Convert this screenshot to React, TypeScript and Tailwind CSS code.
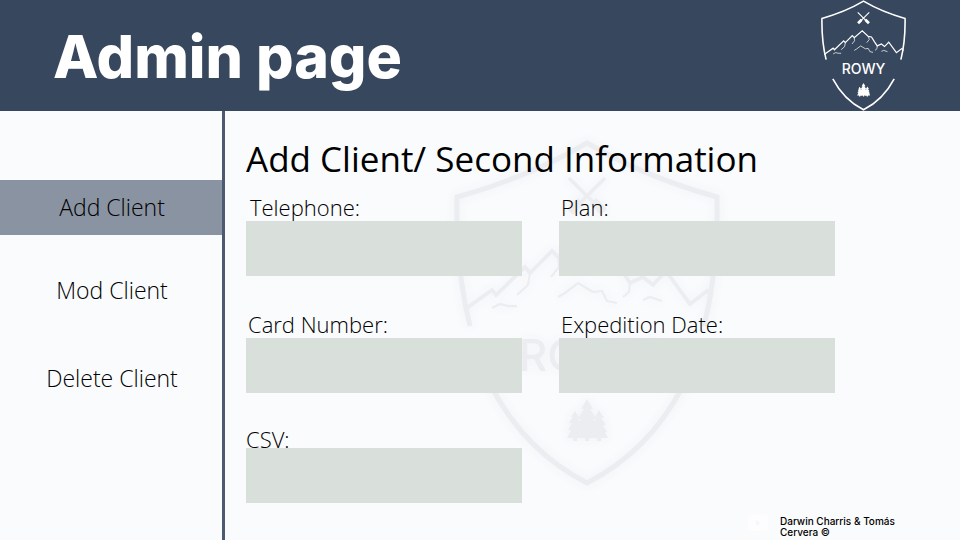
import { useState } from "react";

type CrestProps = { className: string; weight: number };

function Crest({ className, weight }: CrestProps) {
  return (
    <svg viewBox="0 0 266 346" className={className} fill="none" stroke="currentColor" strokeWidth={weight} aria-hidden="true">
      <path d="M16 186C7 150 2 105 3 57C50 44 94 26 133 3C172 26 216 44 263 57C264 105 259 150 250 186" />
      <path d="M37 246C60 290 94 323 133 343C172 323 206 290 229 246" />
      <g strokeWidth={weight * 0.75}>
        <path d="M10 170L38 150L42 155L71 127L76 133L98 111L104 117L129 96L148 113L158 115L168 131L176 143L189 137L199 145L212 131L236 164L253 151L258 157" />
      </g>
      <g strokeWidth={weight * 0.45}>
        <path d="M76 133L74 145L63 155M104 117L105 127L97 137M148 113L151 123L143 133M104 157L111 153L124 143L139 152L148 151L153 161L163 163M176 143L175 152L169 157M189 160L196 157L208 161M38 168L46 164L54 166L63 166" />
      </g>
      <path d="M115 38L133 56L146 69M151 38L133 56L120 69" strokeWidth={weight * 0.7} />
      <path d="M139 61L150 72M127 61L116 72" strokeWidth={weight * 1.7} />
      <g fill="currentColor" stroke="none">
        <path d="M133 259L139 269H136L142 279H139L145 289H142L147 298H135V301H131V298H119L124 289H121L127 279H124L130 269H127Z" />
        <path d="M121 271L126 279H124L128 287H126L130 298H123V301H119V298H113L117 290H114L118 283H115L119 277H117Z" />
        <path d="M145 270L150 278H147L152 285H149L153 292H151L154 298H147V301H143V298H137L140 287H138L142 279H140Z" />
        <text x="133" y="231" textAnchor="middle" fontSize="44" fontWeight="500" className="font-['Inter',sans-serif]">ROWY</text>
      </g>
    </svg>
  );
}

const sections = [
  { name: "Add Client", spacing: "mt-[69px]" },
  { name: "Mod Client", spacing: "mt-7" },
  { name: "Delete Client", spacing: "mt-[33px]" },
];

const fields = [
  { id: "telephone", label: "Telephone:", type: "tel", row: "", inset: "pl-1" },
  { id: "plan", label: "Plan:", type: "text", row: "", inset: "pl-0.5" },
  { id: "card", label: "Card Number:", type: "text", row: "mt-[34px]", inset: "pl-0.5" },
  { id: "expedition", label: "Expedition Date:", type: "text", row: "mt-[34px]", inset: "pl-0.5" },
  { id: "csv", label: "CSV:", type: "text", row: "mt-8 *:first:-mb-[5px]", inset: "" },
];

export default function App() {
  const [active, setActive] = useState("Add Client");

  return (
    <div className="flex min-h-screen flex-col bg-[#fafbfd] font-['Open_Sans',sans-serif] text-black">
      <header className="flex h-[111px] items-start justify-between bg-[#37475d] pr-[54px] pl-[53px] text-white">
        <h1 className="pt-[21px] font-['Inter',sans-serif] text-[59px] leading-[72px] font-extrabold">Admin page</h1>
        <Crest className="h-[111px] w-[85px]" weight={5} />
      </header>

      <div className="flex grow">
        <nav className="flex w-[225px] shrink-0 flex-col border-r-3 border-[#4b5a70]">
          {sections.map((s) => (
            <button
              key={s.name}
              type="button"
              onClick={() => setActive(s.name)}
              className={`h-[55px] pl-0.5 text-center text-[23px] leading-[55px] font-light ${s.spacing} ${active === s.name ? "bg-[#8a93a2]" : ""}`}
            >
              {s.name}
            </button>
          ))}
        </nav>

        <main className="relative flex grow flex-col pr-[125px] pl-[21px]">
          <Crest
            className="absolute top-[29px] left-[229px] h-[346px] w-[266px] text-[#ecedf1] drop-shadow-[0_0_5px_#f0f1f5]"
            weight={5}
          />
          <h2 className="relative pt-6 text-[35px] leading-[48px]">Add Client/ Second Information</h2>
          <form className="relative grid grid-cols-2 gap-x-[37px] pt-[10px]">
            {fields.map((f) => (
              <div key={f.id} className={`flex flex-col ${f.row}`}>
                <label htmlFor={f.id} className={`relative z-10 text-[22px] leading-7 font-light ${f.inset}`}>
                  {f.label}
                </label>
                <input id={f.id} type={f.type} className="h-[55px] w-full bg-[#d9dfda] px-3 text-xl outline-none" />
              </div>
            ))}
          </form>
          <footer className="relative mt-auto -mr-[100px] flex items-start gap-3 self-end pb-0.5">
            <svg viewBox="0 0 20 16" className="h-4 w-5" aria-hidden="true">
              <rect width="20" height="16" rx="3" fill="#fdfdfe" />
              <path d="M8 5L13 8L8 11Z" fill="#f6f7f9" />
            </svg>
            <p className="w-[155px] pt-px font-['Inter',sans-serif] text-[10px] leading-[11px] font-medium">
              Darwin Charris &amp; Tomás
              <br />
              Cervera ©
            </p>
          </footer>
        </main>
      </div>
    </div>
  );
}
